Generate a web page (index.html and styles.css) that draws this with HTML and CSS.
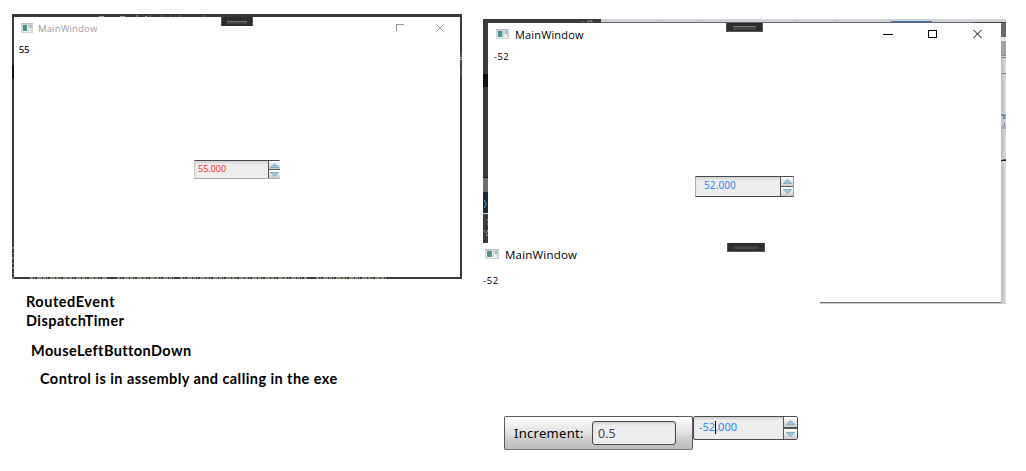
FILE: index.html
```html
<!DOCTYPE html>
<html lang="en">
<head>
<meta charset="utf-8">
<title>MainWindow</title>
<link rel="stylesheet" href="styles.css">
</head>
<body>
<svg class="defs" width="0" height="0">
  <defs>
    <linearGradient id="teal" x1="0" y1="0" x2="1" y2="1"><stop offset="0" stop-color="#4387a0"/><stop offset="1" stop-color="#55a279"/></linearGradient>
    <symbol id="app" viewBox="0 0 14 10" preserveAspectRatio="none">
      <rect width="14" height="10" fill="#cdd0d4"/><path d="M0 0h14v1H0z" fill="#b9bdc3"/>
      <rect x="1" y="2" width="12" height="7" fill="#eef0f2"/>
      <rect x="2" y="2" width="5" height="6" fill="url(#teal)"/>
      <path d="M8.5 2v6M12.5 2v6" stroke="#c5cace"/><rect x="10" y="2" width="2" height="3" fill="#8fb8b2"/>
    </symbol>
    <symbol id="close" viewBox="0 0 9 8"><path d="M.5 0 8.5 8M8.5 0 .5 8" fill="none" stroke="currentColor"/></symbol>
    <symbol id="up" viewBox="0 0 9 5"><path d="M.5 4.6 4.5.5l4 4.1z" fill="#8bcdf5" stroke="#6f94a8" stroke-width=".7"/></symbol>
    <symbol id="down" viewBox="0 0 9 5"><path d="M.5.4h8L4.5 4.5z" fill="#8bcdf5" stroke="#6f94a8" stroke-width=".7"/></symbol>
  </defs>
</svg>
<main class="canvas">
  <section class="window inactive">
    <svg class="edge edge-a" width="450" height="265">
      <path d="M87 2.5h5M108 2.5h5M124 2h2M133 2.5h2M138 2h1M149 2h1M158 2h1M167 2h1M192 2h1" stroke="#aba093" stroke-width="1"/>
      <path d="M1 51v13" stroke="#111" stroke-width="2"/>
      <path d="M449 38v12M449 52v11" stroke="#435047" stroke-width="2"/><path d="M448 43.5h2M448 45.5h2" stroke="#9bbace"/>
      <path d="M1 233v32" stroke="#5e8d89" stroke-width="2" stroke-dasharray="2 4 1 3"/>
      <path d="M18 264h78M105 264h58M168 264h127M304 264h70" stroke="#8d897c" stroke-width="2" stroke-dasharray="3 1 1 2 5 1"/>
    </svg>
    <div class="tab"></div>
    <header class="titlebar">
      <svg class="app"><use href="#app"/></svg><span class="title">MainWindow</span>
      <i class="corner"></i><svg class="close"><use href="#close"/></svg>
    </header>
    <p class="value">55</p>
    <div class="spin small red"><span class="num">55.000</span><div class="arrows"><b><svg><use href="#up"/></svg></b><b><svg><use href="#down"/></svg></b></div></div>
  </section>

  <section class="window active">
    <svg class="edge" width="523" height="285">
      <defs><linearGradient id="shade"><stop offset="0" stop-color="#bcbcbc"/><stop offset="1" stop-color="#dedede"/></linearGradient></defs>
      <path d="M0 0h118v4H5v220H0z" fill="#3a3a3b"/>
      <path d="M118 0h405v3H118z" fill="#cfd3d7"/><path d="M118 3.5h401" stroke="#66686c"/>
      <path d="M122.5 1v2M175.5 1v2M215.5 1v2M258.5 1v2M312.5 1v2M352.5 1v2" stroke="#a9bfda"/>
      <path d="M105 3.5v-1.5h4v1.5M99 2.5h1" fill="none" stroke="#aa9686"/>
      <path d="M408 2.5h41" stroke="#3977b8"/><path d="M490 3.5h33" stroke="#444"/>
      <path d="M0 55h5v13H0z" fill="#111"/><path d="M0 158h5v1H0z" fill="#111"/><path d="M0 159h5v14H0z" fill="#6d6d6d"/>
      <path d="M0 173h5v21H0z" fill="#19273a"/><path d="M0 194.5h5" stroke="#ddd"/>
      <path d="M1 181q4 4 0 8" stroke="#5e9dc0" fill="none"/><path d="M4 201h1M4 205h1M1 212h1M3 214l2-3M3 216h2" stroke="#91b8b5"/>
      <path d="M518 4h5v281h-5z" fill="url(#shade)"/>
      <path d="M518 4h5v14h-5z" fill="#68696b"/><path d="M518 18h5v4h-5z" fill="#e5e5e5"/><path d="M518 22h5v14h-5z" fill="#a3a3a3"/>
      <path d="M518 36.5h5M518 38.5h5M518 54.5h5" stroke="#88898b"/>
      <path d="M518 96h3v4" stroke="#37506b" fill="none"/><path d="M522 95v5" stroke="#339bd4"/>
      <path d="M521.5 103v3" stroke="#8190aa"/><path d="M518 106h5v4h-5z" fill="#a4afc3"/><path d="M518 141.5h5" stroke="#222"/><path d="M520 140.5h3" stroke="#206a9a"/>
      <path d="M337 283.5h181" stroke="#707070"/><path d="M337 284.5h186" stroke="#ccc"/>
    </svg>
    <div class="tab"></div>
    <header class="titlebar">
      <svg class="app"><use href="#app"/></svg><span class="title">MainWindow</span>
      <i class="min"></i><i class="max"></i><svg class="close"><use href="#close"/></svg>
    </header>
    <p class="value">-52</p>
    <div class="spin medium"><span class="num">52.000</span><div class="arrows"><b><svg><use href="#up"/></svg></b><b><svg><use href="#down"/></svg></b></div></div>
  </section>

  <section class="window fragment">
    <div class="tab"></div>
    <header class="titlebar"><svg class="app"><use href="#app"/></svg><span class="title">MainWindow</span></header>
    <p class="value">-52</p>
  </section>

  <section class="notes">
    <p class="n1">RoutedEvent</p><p class="n2">DispatchTimer</p><p class="n3">MouseLeftButtonDown</p><p class="n4">Control is in assembly and calling in the exe</p>
  </section>

  <section class="controls">
    <div class="increment"><label class="caption">Increment:</label><span class="field">0.5</span></div>
    <div class="spin large"><span class="num">-52<i class="caret"></i>.000</span><div class="arrows"><b><svg><use href="#up"/></svg></b><b><svg><use href="#down"/></svg></b></div></div>
  </section>
</main>
</body>
</html>
```
FILE: styles.css
```css
* { box-sizing: border-box; }
body { margin: 0; background: #fff; font-family: "Open Sans", "Noto Sans", sans-serif; color: #000; }
p { margin: 0; }
svg { display: block; flex: none; }
.defs { position: absolute; }
.canvas { position: relative; width: 1026px; height: 471px; overflow: hidden; }

/* Windows on the free canvas */
.window, .notes, .controls { position: absolute; }
.inactive { left: 12px; top: 14px; width: 450px; height: 265px; border: solid #3a3a3b; border-width: 3px 2px 2px; }
.active { left: 483px; top: 19px; width: 523px; height: 285px; padding: 4px 5px 2px; }
.fragment { left: 483px; top: 243px; width: 337px; height: 61px; background: #fff; }
.edge { position: absolute; left: 0; top: 0; }
.edge-a { left: -2px; top: -3px; }

.tab { position: absolute; width: 37px; height: 9px; background: #2d2d30; border: 1px solid #55565a; border-width: 0 1px 1px; padding: 3px 6px; }
.tab::before { content: ""; display: block; height: 3px; background: #444; border-top: 1px solid #777; }
.inactive .tab { left: 207px; top: 0; width: 32px; padding: 4px 5px; border-bottom: 0; }
.inactive .tab::before { height: 2px; }
.active .tab { left: 243px; top: 4px; }
.fragment .tab { left: 244px; top: 0; width: 38px; }
.fragment .tab::before { height: 2px; border-color: #444; }

.titlebar { display: flex; align-items: flex-start; height: 24px; white-space: nowrap; }
.titlebar i, .titlebar .close { flex: none; }
.title { font-size: 11px; line-height: 16px; }
.app { width: 14px; height: 10px; }
.value { white-space: nowrap; }

.inactive .titlebar { padding: 6px 0 0 7px; color: #888; }
.inactive .app { width: 12px; }
.inactive .title { width: 355px; margin: -2px 0 0 5px; font-size: 9.5px; color: #9b96a3; letter-spacing: .15px; }
.corner { width: 8px; height: 7px; margin: 1px 0 0 3px; border: solid #999; border-width: 1px 0 0 1px; }
.inactive .close { width: 8px; height: 8px; margin: 1px 0 0 32px; }
.inactive .value { padding: 2px 0 0 5px; font-size: 9px; line-height: 14px; letter-spacing: .1px; -webkit-text-stroke: .2px #000; }

.active .titlebar { padding: 6px 0 0 8px; }
.active .app { width: 13px; }
.active .title { width: 362px; margin: -2px 0 0 6px; letter-spacing: .15px; }
.min { width: 10px; height: 1px; margin: 5px 0 0 6px; background: #000; }
.max { width: 9px; height: 8px; margin: 1px 0 0 35px; border: 1px solid #000; }
.active .close { width: 9px; height: 8px; margin: 1px 0 0 36px; }
.active .value { padding: 3px 0 0 6px; font-size: 9.5px; line-height: 14px; letter-spacing: .4px; }

.fragment .titlebar { padding: 6px 0 0 2px; }
.fragment .title { margin: -2px 0 0 6px; font-size: 11.5px; letter-spacing: .2px; }
.fragment .value { padding-top: 7px; font-size: 9.5px; line-height: 14px; letter-spacing: .6px; }

/* Numeric up-down */
.spin { display: flex; background: #ededed; border: 1px solid #494a4d; color: #2d8af0; font-family: "Noto Sans", sans-serif; box-shadow: inset 0 2px 2px #d5d5d5; }
.num { flex: 1; padding-left: 4px; white-space: nowrap; }
.arrows { display: flex; flex-direction: column; border-left: 1px solid #555; }
.arrows b { flex: 1; display: flex; align-items: center; justify-content: center; background: linear-gradient(#fff, #ccc); }
.arrows b + b { border-top: 1px solid #555; }
.arrows svg { width: 9px; height: 5px; }
.small { width: 86px; height: 19px; margin: 103px 0 0 180px; border-bottom-color: #aaa; border-left-color: #ccc; border-right-color: #ccc; }
.small .num { padding-left: 3px; font-size: 9px; line-height: 15px; }
.small .arrows { width: 12px; margin-right: -1px; }
.red { color: #f52b2b; }
.medium { width: 99px; height: 21px; margin: 112px 0 0 207px; border-left-color: #aaa; border-right-color: #aaa; }
.medium .num { padding-left: 8px; font-size: 10px; line-height: 17px; letter-spacing: .1px; }
.medium .arrows { width: 13px; }

.notes { left: 26px; top: 292px; font: bold 14.5px/19px "Lato", sans-serif; letter-spacing: .43px; white-space: nowrap; }
.n1 { letter-spacing: .53px; }
.n3 { padding: 11px 0 0 5px; letter-spacing: .4px; }
.n4 { padding: 9px 0 0 14px; }

.controls { left: 504px; top: 416px; display: flex; align-items: flex-start; }
.increment { display: flex; width: 189px; height: 34px; padding: 4px 0 0 9px; border: 1px solid #59595b; border-bottom-color: #777; border-radius: 2px; background: linear-gradient(#fff, #e0e0e0 50%, #c8c8c8 75%, #bcbcbc); font-family: "Noto Sans", sans-serif; }
.caption { width: 78px; font-size: 13px; line-height: 25px; letter-spacing: .3px; white-space: nowrap; }
.field { width: 84px; height: 24px; padding-left: 5px; border: 1px solid #494a4d; border-radius: 3px; background: #ededed; color: #444; font-size: 12.5px; line-height: 23px; box-shadow: inset 0 2px 2px #d5d5d5; }
.large { width: 105px; height: 24px; border-radius: 2px; }
.large .num { padding-left: 5px; font-size: 11px; line-height: 20px; }
.large .arrows { width: 14px; }
.large .arrows b + b { border-top-width: 2px; }
.caret { display: inline-block; width: 1px; height: 13px; margin-right: -1px; background: #000; vertical-align: -3px; }
```
